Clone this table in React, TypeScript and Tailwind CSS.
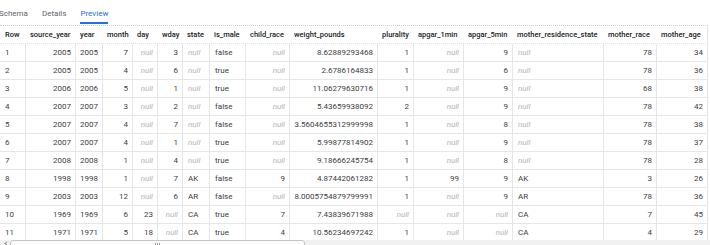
import React from "react";

type Align = "left" | "right";

interface Column {
  key: string;
  width: number;
  align: Align;
}

const columns: Column[] = [
  { key: "Row", width: 25, align: "left" },
  { key: "source_year", width: 50, align: "right" },
  { key: "year", width: 27, align: "right" },
  { key: "month", width: 30, align: "right" },
  { key: "day", width: 25, align: "right" },
  { key: "wday", width: 25, align: "right" },
  { key: "state", width: 27, align: "left" },
  { key: "is_male", width: 36, align: "left" },
  { key: "child_race", width: 44, align: "right" },
  { key: "weight_pounds", width: 88, align: "right" },
  { key: "plurality", width: 36, align: "right" },
  { key: "apgar_1min", width: 50, align: "right" },
  { key: "apgar_5min", width: 49, align: "right" },
  { key: "mother_residence_state", width: 91, align: "left" },
  { key: "mother_race", width: 53, align: "right" },
  { key: "mother_age", width: 52, align: "right" },
];

const N = null;

// one row per record, in column order
const rows: (string | number | null)[][] = [
  [1, 2005, 2005, 7, N, 3, N, "false", N, "8.62889293468", 1, N, 9, N, 78, 34],
  [2, 2005, 2005, 4, N, 6, N, "true", N, "2.6786164833", 1, N, 6, N, 78, 36],
  [3, 2006, 2006, 5, N, 1, N, "true", N, "11.06279630716", 1, N, 9, N, 68, 38],
  [4, 2007, 2007, 3, N, 2, N, "false", N, "5.43659938092", 2, N, 9, N, 78, 42],
  [5, 2007, 2007, 4, N, 7, N, "false", N, "3.5604655312999998", 1, N, 8, N, 78, 38],
  [6, 2007, 2007, 4, N, 1, N, "true", N, "5.99877814902", 1, N, 9, N, 78, 37],
  [7, 2008, 2008, 1, N, 4, N, "true", N, "9.18666245754", 1, N, 8, N, 78, 28],
  [8, 1998, 1998, 1, N, 7, "AK", "false", 9, "4.87442061282", 1, 99, 9, "AK", 3, 26],
  [9, 2003, 2003, 12, N, 6, "AR", "false", N, "8.0005754879799991", 1, N, 9, "AR", 78, 36],
  [10, 1969, 1969, 6, 23, N, "CA", "true", 7, "7.43839671988", N, N, N, "CA", 7, 45],
  [11, 1971, 1971, 5, 18, N, "CA", "true", 4, "10.56234697242", 1, N, N, "CA", 4, 29],
];

function Tabs() {
  const tabs = ["Schema", "Details", "Preview"];
  return (
    <div className="flex h-[25px] gap-[14px] ml-[-1px]">
      {tabs.map((t) => {
        const active = t === "Preview";
        return (
          <div
            key={t}
            className={`h-[24px] pt-[9px] pb-[3px] leading-[10px] border-b-2 ${
              active ? "border-[#1a73e8] text-[#1a73e8]" : "border-transparent text-[#5f6368]"
            }`}
          >
            {t}
          </div>
        );
      })}
    </div>
  );
}

function Cell({ col, value, first, last }: { col: Column; value: string | number | null; first: boolean; last: boolean }) {
  const isNull = value === null;
  return (
    <div
      style={{ width: col.width }}
      className={`shrink-0 h-full flex items-center pl-[5px] pr-[4px] whitespace-nowrap overflow-hidden ${
        first ? "" : "border-l border-[#e6e6e6]"
      } ${last ? "border-r" : ""} ${col.align === "right" ? "justify-end" : "justify-start"} ${
        isNull ? "italic text-[#b0b3b7]" : "text-[#3c4043]"
      }`}
    >
      {isNull ? "null" : value}
    </div>
  );
}

function Scrollbar() {
  return (
    <div className="h-[5px] bg-[#f1f1f1] overflow-hidden flex">
      <div className="w-[10px] shrink-0 flex justify-center pt-[1px]">
        <div className="w-[3px] h-[3px] border-l border-t border-[#8a8a8a] rotate-[-45deg] translate-x-[1px] translate-y-[1px]" />
      </div>
      <div className="w-[295px] h-[10px] shrink-0 rounded-[3px] border border-[#c6c6c6] bg-[#fbfbfb] flex justify-center gap-[1px] pt-[2px]">
        <div className="w-px h-[3px] bg-[#9a9a9a]" />
        <div className="w-px h-[3px] bg-[#9a9a9a]" />
        <div className="w-px h-[3px] bg-[#9a9a9a]" />
      </div>
    </div>
  );
}

export default function App() {
  return (
    <div
      className="w-[710px] h-[245px] bg-white overflow-hidden flex flex-col text-[8px]"
      style={{ fontFamily: "Roboto, 'Noto Sans', Arial, sans-serif" }}
    >
      <Tabs />
      <div className="flex-1 overflow-hidden">
        <div className="w-max">
          {/* header */}
          <div className="flex h-[19px] border-t border-dotted border-t-[#cfd1d4] border-b border-b-[#e3e3e3]">
            {columns.map((c, j) => (
              <div
                key={c.key}
                style={{ width: c.width }}
                className={`shrink-0 h-full flex items-center pl-[5px] text-[7.5px] font-medium text-[#202124] whitespace-nowrap overflow-hidden ${
                  j === columns.length - 1 ? "border-r border-[#e6e6e6]" : ""
                }`}
              >
                {c.key}
              </div>
            ))}
          </div>
          {rows.map((r, i) => (
            <div key={i} className="flex h-[18px] border-b border-[#e6e6e6]">
              {columns.map((c, j) => (
                <Cell key={c.key} col={c} value={r[j]} first={j === 0} last={j === columns.length - 1} />
              ))}
            </div>
          ))}
        </div>
      </div>
      <Scrollbar />
    </div>
  );
}
